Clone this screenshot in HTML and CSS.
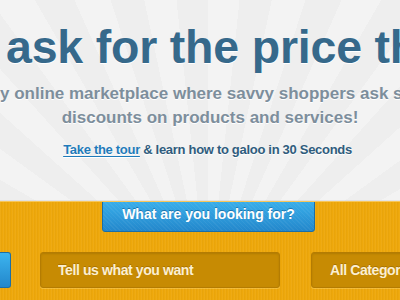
FILE: index.html
```html
<!DOCTYPE html>
<html lang="en">
<head>
    <meta charset="UTF-8">
    <meta name="viewport" content="width=device-width, initial-scale=1.0">
    <title>Galoo - ask for the price that you want</title>
    <link rel="stylesheet" href="styles.css">
</head>
<body>

    <div class="hero">
        <h1 class="hero-title">
            <span class="cut cut-title">Galoo lets every buyer&nbsp;</span>
            <span>ask for the price that you want</span>
        </h1>
        <p class="hero-text">
            <span class="hero-line">
                <span class="cut cut-line">Galoo is the onl</span>
                <span>y online marketplace where savvy shoppers ask sellers for</span>
            </span>
            <span class="hero-line centered">discounts on products and services!</span>
        </p>
        <p class="tour"><a href="#">Take the tour</a> &amp; learn how to galoo in 30 Seconds</p>
    </div>

    <div class="search-band">
        <div class="tab-row">
            <div class="tab">What are you looking for?</div>
        </div>
        <div class="search-row">
            <div class="side-button"></div>
            <input class="field field-query" type="text" placeholder="Tell us what you want">
            <div class="field field-category">All Categories</div>
        </div>
    </div>

</body>
</html>
```

FILE: styles.css
```css
body {
    margin: 0;
    width: 400px;
    height: 300px;
    overflow: hidden;
    display: flex;
    flex-direction: column;
    font-family: "Liberation Sans", Arial, sans-serif;
    background-color: #f1f1f1;
    background-image: repeating-conic-gradient(from 0deg at 208px 300px, #f3f3f3 0deg 6deg, #eeeeee 6deg 12deg);
}
.hero {
    padding-top: 21px;
}
.hero-title {
    display: flex;
    margin: 0;
    white-space: nowrap;
    overflow: hidden;
    font-size: 46.5px;
    line-height: 52px;
    letter-spacing: -0.2px;
    font-weight: bold;
    color: #36698b;
    text-shadow: 0 1px 0 #ffffff;
}
.cut {
    display: flex;
    justify-content: flex-end;
    overflow: hidden;
    flex-shrink: 0;
}
.cut-title {
    width: 6px;
}
.cut-line {
    width: 0;
}
.hero-text {
    margin: 9px 0 0;
    font-size: 17px;
    line-height: 24px;
    font-weight: bold;
    color: #7d8e9c;
    text-shadow: 0 1px 0 #ffffff;
}
.hero-line {
    display: flex;
    white-space: nowrap;
    overflow: hidden;
}
.hero-line.centered {
    justify-content: center;
    padding-left: 20px;
}
.tour {
    margin: 11px 0 0;
    padding-left: 15px;
    text-align: center;
    font-size: 13px;
    line-height: 18px;
    letter-spacing: -0.3px;
    font-weight: bold;
    color: #2f5c7d;
    text-shadow: 0 1px 0 #ffffff;
}
.tour a {
    color: #1f7bba;
    text-decoration: underline;
    text-underline-offset: 2px;
}
.search-band {
    flex: 1;
    display: flex;
    flex-direction: column;
    margin-top: 42px;
    border-top: 1px solid #f7c65a;
    box-shadow: 0 -1px 0 rgba(0, 0, 0, 0.06);
    background-color: #eea80b;
    background-image: repeating-linear-gradient(90deg, rgba(255, 255, 255, 0.04) 0 1px, rgba(0, 0, 0, 0.025) 1px 2px, transparent 2px 3px);
    overflow: hidden;
}
.tab-row {
    display: flex;
    justify-content: center;
    padding-left: 17px;
    margin-top: -6px;
}
.tab {
    position: relative;
    width: 211px;
    height: 34px;
    line-height: 34px;
    text-align: center;
    font-size: 14px;
    font-weight: bold;
    color: #ffffff;
    text-shadow: 0 -1px 0 rgba(0, 60, 110, 0.45);
    background-color: #2a95d8;
    background-image:
        repeating-linear-gradient(45deg, rgba(255, 255, 255, 0.05) 0 1px, transparent 1px 3px),
        linear-gradient(#3cb4ef, #2387cb);
    border: 1px solid #1b6ea6;
    border-radius: 3px;
    box-shadow: inset 0 1px 0 rgba(255, 255, 255, 0.3);
}
.tab::after {
    content: "";
    position: absolute;
    top: 0;
    right: -5px;
    border-left: 4px solid #1d67a0;
    border-top: 5px solid transparent;
}
.search-row {
    display: flex;
    margin-top: 20px;
    height: 36px;
}
.side-button {
    flex: 0 0 11px;
    box-sizing: border-box;
    background-image: linear-gradient(#3cb4ef, #2387cb);
    border: 1px solid #1b6ea6;
    border-left: 0;
    border-radius: 0 3px 3px 0;
}
.field {
    box-sizing: border-box;
    flex-shrink: 0;
    height: 36px;
    margin: 0;
    padding: 0 0 0 17px;
    font-family: "Liberation Sans", Arial, sans-serif;
    font-size: 14px;
    font-weight: bold;
    letter-spacing: -0.4px;
    line-height: 34px;
    color: #fcefd2;
    text-shadow: 0 -1px 0 rgba(110, 70, 0, 0.35);
    background-color: #c78b03;
    border: 1px solid #b47c02;
    border-radius: 3px;
    box-shadow: inset 0 1px 2px rgba(0, 0, 0, 0.12), 0 1px 0 rgba(255, 225, 140, 0.35);
    outline: none;
}
.field::placeholder {
    color: #fcefd2;
    opacity: 1;
}
.field-query {
    width: 240px;
    margin-left: 29px;
}
.field-category {
    width: 140px;
    margin-left: 31px;
    padding-left: 18px;
    white-space: nowrap;
}
```
